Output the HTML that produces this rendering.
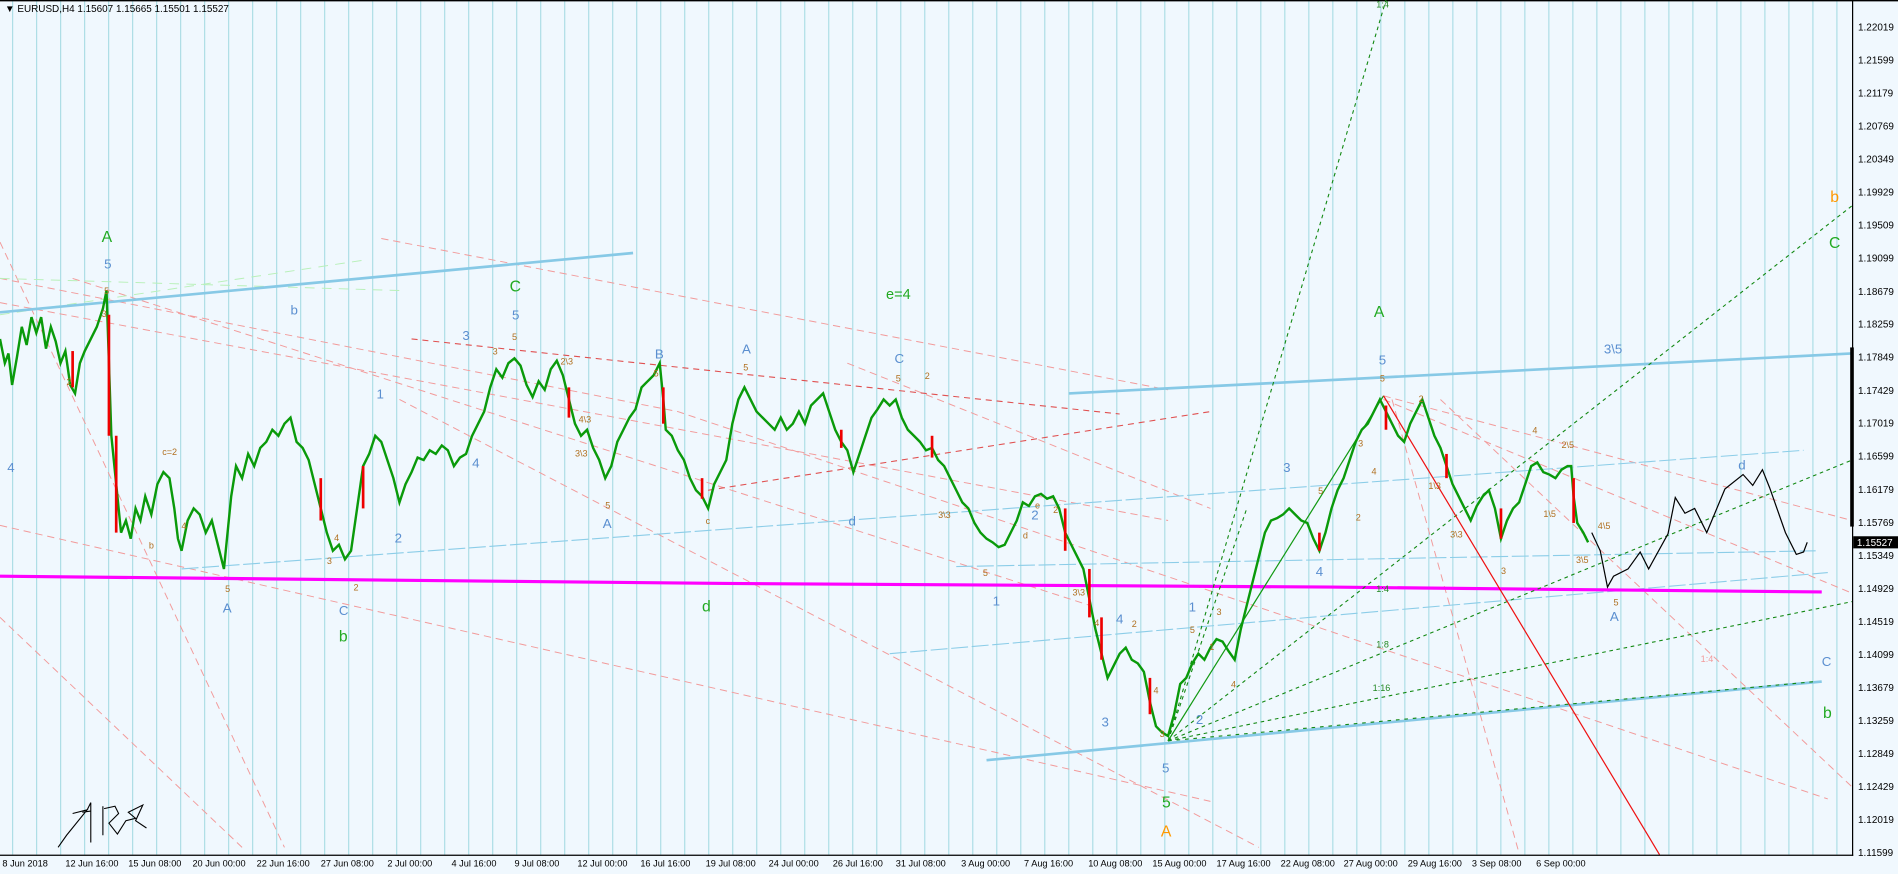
<!DOCTYPE html>
<html><head><meta charset="utf-8"><style>
html,body{margin:0;padding:0;background:#f0f8fe;overflow:hidden}
svg{display:block}
text{font-family:"Liberation Sans","DejaVu Sans",sans-serif}
</style></head><body>
<svg width="1898" height="874" viewBox="0 0 1568 722" preserveAspectRatio="none" xmlns="http://www.w3.org/2000/svg">
<defs>
<pattern id="gp" x="10" y="0" width="19.83" height="722" patternUnits="userSpaceOnUse">
<rect x="0" y="0" width="0.9" height="722" fill="#a6dbe3"/>
</pattern>
</defs>
<rect x="0" y="0" width="1568" height="722" fill="#f0f8fe"/>
<rect x="0" y="1" width="1530" height="705" fill="url(#gp)"/>
<line x1="0" y1="0.5" x2="1568" y2="0.5" stroke="#000" stroke-width="1.2"/>
<g fill="none">
 <g stroke="#f29a9a" stroke-width="0.8" stroke-dasharray="6,4">
  <path d="M0 200 L235 700"/>
  <path d="M0 434 L1000 662"/>
  <path d="M0 250 L965 430"/>
  <path d="M0 230 L560 340 L1510 660"/>
  <path d="M315 197 L965 322"/>
  <path d="M60 230 L900 500"/>
  <path d="M330 330 L1040 700"/>
  <path d="M1143 327 L1530 430"/>
  <path d="M1150 330 L1255 705"/>
  <path d="M1190 330 L1530 650"/>
  <path d="M1143 330 L1530 490"/>
  <path d="M0 510 L200 700"/>
  <path d="M700 300 L1000 420"/>
 </g>
 <g stroke="#e05050" stroke-width="0.9" stroke-dasharray="5,4">
  <path d="M340 280 L925 342"/>
  <path d="M585 405 L1000 340"/>
 </g>
 <g stroke="#b8f0b8" stroke-width="0.8" stroke-dasharray="8,6">
  <path d="M0 230 L330 240"/>
  <path d="M0 260 L300 215"/>
 </g>
 <g stroke="#8ccde8" stroke-width="0.9" stroke-dasharray="14,3">
  <path d="M150 470 L1490 372"/>
  <path d="M735 540 L1510 473"/>
  <path d="M790 468 L1500 455"/>
 </g>
 <g stroke="#87c9e6" stroke-width="2.2">
  <path d="M0 258 L523 209"/>
  <path d="M883 325 L1530 292"/>
  <path d="M815 628 L1505 563"/>
 </g>
 <path d="M0 476 L600 482 L1100 485 L1300 487 L1505 489" stroke="#ff00ff" stroke-width="2.6"/>
 <g stroke="#118811" stroke-width="0.9" stroke-dasharray="3,3">
  <path d="M965 612 L1145 0"/>
  <path d="M965 612 L1530 170"/>
  <path d="M965 612 L1530 380"/>
  <path d="M965 612 L1530 497"/>
  <path d="M965 612 L1500 563" stroke-dasharray="3,4"/>
  <path d="M965 612 L1030 420"/>
 </g>
 <path d="M965 612 L1143 327" stroke="#119911" stroke-width="1"/>
 <path d="M1143 327 L1371 706" stroke="#ee1111" stroke-width="1"/>
 <path id="px" d="M0 280 L4 300 L7 292 L10 318 L14 295 L18 270 L22 285 L26 262 L30 275 L34 262 L38 288 L42 270 L46 282 L50 300 L54 290 L58 318 L62 325 L66 300 L70 290 L75 280 L80 270 L85 255 L88 240 L90 300 L92 360 L96 400 L100 440 L104 430 L108 445 L112 420 L116 430 L120 410 L125 425 L130 400 L135 390 L140 395 L144 420 L147 445 L150 455 L155 430 L160 420 L165 425 L170 440 L175 430 L180 450 L185 470 L188 440 L191 410 L195 385 L200 395 L205 375 L210 385 L215 370 L220 365 L225 355 L230 360 L235 350 L240 345 L245 365 L250 370 L255 380 L260 400 L265 420 L270 440 L275 455 L280 450 L285 462 L290 455 L295 420 L300 385 L305 375 L310 360 L315 365 L320 380 L325 395 L330 415 L335 400 L340 390 L345 378 L350 380 L355 372 L360 375 L365 368 L370 372 L375 385 L380 378 L385 375 L390 360 L395 350 L400 340 L405 320 L410 305 L415 312 L420 300 L425 296 L430 302 L435 318 L440 328 L445 315 L450 322 L455 305 L460 298 L465 310 L470 330 L475 350 L480 360 L485 355 L490 370 L495 380 L500 395 L505 385 L510 365 L515 355 L520 345 L525 338 L530 320 L535 315 L540 310 L545 300 L548 330 L550 355 L555 360 L560 372 L565 380 L570 395 L575 405 L580 410 L585 420 L590 400 L595 390 L600 380 L605 350 L610 330 L615 320 L620 330 L625 340 L630 345 L635 350 L640 355 L645 345 L650 355 L655 350 L660 340 L665 350 L670 335 L675 330 L680 325 L685 340 L690 355 L695 365 L700 372 L705 390 L710 375 L715 360 L720 345 L725 338 L730 330 L735 335 L740 330 L745 345 L750 355 L755 360 L760 365 L765 372 L770 370 L775 380 L780 385 L785 395 L790 405 L795 415 L800 420 L805 432 L810 440 L815 445 L820 448 L825 452 L830 450 L835 440 L840 430 L845 415 L850 418 L855 410 L860 408 L865 412 L870 410 L875 420 L880 440 L885 450 L890 460 L895 470 L900 495 L905 520 L910 540 L915 560 L920 550 L925 540 L930 535 L935 545 L940 548 L945 555 L950 580 L955 600 L960 605 L965 608 L970 590 L975 565 L980 560 L985 548 L990 540 L995 545 L1000 535 L1005 528 L1010 530 L1015 538 L1020 545 L1025 520 L1030 500 L1035 480 L1040 460 L1045 440 L1050 430 L1055 428 L1060 425 L1065 420 L1070 425 L1075 430 L1080 432 L1085 445 L1090 455 L1095 440 L1100 420 L1105 405 L1110 395 L1115 380 L1120 365 L1125 355 L1130 350 L1135 340 L1140 330 L1145 340 L1150 350 L1155 360 L1160 365 L1165 350 L1170 340 L1175 330 L1180 345 L1185 360 L1190 370 L1195 385 L1200 400 L1205 410 L1210 420 L1215 430 L1220 418 L1225 410 L1230 405 L1235 420 L1240 445 L1245 430 L1250 420 L1255 415 L1260 400 L1265 385 L1270 382 L1275 390 L1280 392 L1285 395 L1290 388 L1295 385 L1298 385 L1300 410 L1303 432 L1308 440 L1312 448" stroke="#0a9a0a" stroke-width="2"/>
 <g stroke="#ee0000" stroke-width="2.2">
  <path d="M90 260 L90 360"/><path d="M96 360 L96 440"/><path d="M300 385 L300 420"/><path d="M548 320 L548 350"/><path d="M880 420 L880 455"/><path d="M900 470 L900 510"/><path d="M910 510 L910 545"/><path d="M1145 335 L1145 355"/><path d="M1240 420 L1240 445"/><path d="M1300 395 L1300 432"/><path d="M60 290 L60 320"/><path d="M265 395 L265 430"/><path d="M470 320 L470 345"/><path d="M580 395 L580 412"/><path d="M695 355 L695 370"/><path d="M770 360 L770 378"/><path d="M950 560 L950 590"/><path d="M1090 440 L1090 455"/><path d="M1195 375 L1195 395"/>
 </g>
 <path d="M1315 440 L1322 455 L1328 485 L1333 476 L1345 470 L1355 456 L1362 470 L1378 441 L1384 411 L1392 424 L1400 420 L1410 440 L1425 404 L1440 392 L1448 401 L1456 388 L1462 403 L1475 440 L1484 458 L1490 456 L1493 448" stroke="#000" stroke-width="1"/>
 <path d="M48 700 L55 690 L72 669 L60 672 M68 671 L75 670 M72 669 L75 663 L75 696 M85 666 L85 690 M86 668 L95 666 L98 672 L90 680 L97 689 L104 678 L112 676 L106 671 L118 665 L112 678 L121 684" stroke="#000" stroke-width="0.9"/>
</g>
<line x1="1530.5" y1="0" x2="1530.5" y2="707" stroke="#000" stroke-width="1"/>
<line x1="0" y1="706.5" x2="1531" y2="706.5" stroke="#000" stroke-width="1"/>
<rect x="1528.5" y="287" width="3" height="148" fill="#000"/>
<g font-size="8.2" fill="#000">
<text x="1535" y="25.3">1.22019</text><text x="1535" y="52.6">1.21599</text><text x="1535" y="79.8">1.21179</text><text x="1535" y="107.1">1.20769</text><text x="1535" y="134.4">1.20349</text><text x="1535" y="161.7">1.19929</text><text x="1535" y="188.9">1.19509</text><text x="1535" y="216.2">1.19099</text><text x="1535" y="243.5">1.18679</text><text x="1535" y="270.7">1.18259</text><text x="1535" y="298">1.17849</text><text x="1535" y="325.3">1.17429</text><text x="1535" y="352.5">1.17019</text><text x="1535" y="379.8">1.16599</text><text x="1535" y="407.1">1.16179</text><text x="1535" y="434.4">1.15769</text><text x="1535" y="461.6">1.15349</text><text x="1535" y="488.9">1.14929</text><text x="1535" y="516.2">1.14519</text><text x="1535" y="543.4">1.14099</text><text x="1535" y="570.7">1.13679</text><text x="1535" y="598">1.13259</text><text x="1535" y="625.3">1.12849</text><text x="1535" y="652.5">1.12429</text><text x="1535" y="679.8">1.12019</text><text x="1535" y="707">1.11599</text>
</g>
<g font-size="7.6" fill="#000">
<text x="2" y="716">8 Jun 2018</text><text x="54" y="716">12 Jun 16:00</text><text x="106" y="716">15 Jun 08:00</text><text x="159" y="716">20 Jun 00:00</text><text x="212" y="716">22 Jun 16:00</text><text x="265" y="716">27 Jun 08:00</text><text x="320" y="716">2 Jul 00:00</text><text x="373" y="716">4 Jul 16:00</text><text x="425" y="716">9 Jul 08:00</text><text x="477" y="716">12 Jul 00:00</text><text x="529" y="716">16 Jul 16:00</text><text x="583" y="716">19 Jul 08:00</text><text x="635" y="716">24 Jul 00:00</text><text x="688" y="716">26 Jul 16:00</text><text x="740" y="716">31 Jul 08:00</text><text x="794" y="716">3 Aug 00:00</text><text x="846" y="716">7 Aug 16:00</text><text x="899" y="716">10 Aug 08:00</text><text x="952" y="716">15 Aug 00:00</text><text x="1005" y="716">17 Aug 16:00</text><text x="1058" y="716">22 Aug 08:00</text><text x="1110" y="716">27 Aug 00:00</text><text x="1163" y="716">29 Aug 16:00</text><text x="1216" y="716">3 Sep 08:00</text><text x="1269" y="716">6 Sep 00:00</text>
</g>
<rect x="1531" y="443" width="37" height="10" fill="#000"/>
<text x="1534" y="451" font-size="8.2" fill="#fff">1.15527</text>
<text x="4" y="10" font-size="8.2" fill="#000">▼ EURUSD,H4  1.15607 1.15665 1.15501 1.15527</text>
<g font-size="13">
 <text x="84" y="200" fill="#22aa22">A</text>
 <text x="421" y="241" fill="#22aa22">C</text>
 <text x="732" y="247" fill="#22aa22" font-size="12">e=4</text>
 <text x="1135" y="262" fill="#22aa22">A</text>
 <text x="1511" y="205" fill="#22aa22">C</text>
 <text x="1512" y="167" fill="#ff9900">b</text>
 <text x="1506" y="593" fill="#22aa22">b</text>
 <text x="280" y="530" fill="#22aa22">b</text>
 <text x="580" y="505" fill="#22aa22">d</text>
 <text x="960" y="667" fill="#22aa22">5</text>
 <text x="959" y="691" fill="#ff9900">A</text>
</g>
<g font-size="11" fill="#5b8fd0">
 <text x="86" y="222">5</text><text x="423" y="264">5</text><text x="1139" y="301">5</text>
 <text x="6" y="390">4</text><text x="184" y="506">A</text><text x="280" y="508">C</text>
 <text x="240" y="260">b</text><text x="311" y="329">1</text><text x="326" y="448">2</text>
 <text x="382" y="281">3</text><text x="390" y="386">4</text><text x="541" y="296">B</text>
 <text x="613" y="292">A</text><text x="739" y="300">C</text><text x="498" y="436">A</text>
 <text x="852" y="429">2</text><text x="820" y="500">1</text><text x="701" y="434">d</text>
 <text x="1060" y="390">3</text><text x="1087" y="476">4</text><text x="910" y="600">3</text>
 <text x="922" y="515">4</text><text x="982" y="505">1</text><text x="988" y="598">2</text>
 <text x="960" y="638">5</text><text x="1330" y="513">A</text><text x="1505" y="550">C</text>
 <text x="1436" y="388">d</text><text x="1325" y="292">3\5</text>
</g>
<g font-size="7.5" fill="#b07020">
 <text x="86" y="243">5</text><text x="84" y="262">3</text><text x="186" y="489">5</text>
 <text x="134" y="376">c=2</text><text x="423" y="281">5</text><text x="407" y="293">3</text>
 <text x="463" y="301">2\3</text><text x="540" y="311">5</text><text x="614" y="306">5</text>
 <text x="740" y="315">5</text><text x="764" y="313">2</text><text x="1140" y="315">5</text>
 <text x="1172" y="332">2</text><text x="1266" y="358">4</text><text x="1290" y="370">2\5</text>
 <text x="1275" y="427">1\5</text><text x="1320" y="437">4\5</text><text x="1302" y="465">3\5</text>
 <text x="1333" y="500">5</text><text x="1198" y="444">3\3</text><text x="775" y="428">3\3</text>
 <text x="886" y="492">3\3</text><text x="475" y="377">3\3</text><text x="478" y="349">4\3</text>
 <text x="855" y="420">e</text><text x="870" y="424">2</text><text x="845" y="445">d</text>
 <text x="958" y="609">3</text><text x="953" y="573">4</text><text x="1017" y="568">4</text>
 <text x="1005" y="508">3</text><text x="983" y="523">5</text><text x="999" y="537">1</text>
 <text x="1180" y="404">1\3</text><text x="1122" y="369">3</text><text x="1133" y="392">4</text>
 <text x="1120" y="430">2</text><text x="1240" y="474">3</text><text x="1089" y="408">5</text>
 <text x="812" y="476">5</text><text x="500" y="420">5</text><text x="583" y="433">c</text>
 <text x="270" y="466">3</text><text x="292" y="488">2</text><text x="276" y="447">4</text>
 <text x="55" y="318">2</text><text x="150" y="437">4</text><text x="123" y="453">b</text>
 <text x="904" y="517">4</text><text x="935" y="518">2</text><text x="1405" y="547" fill="#f29a9a">1:4</text>
</g>
<g font-size="7.5" fill="#228822">
 <text x="1137" y="489">1:4</text><text x="1137" y="535">1:8</text><text x="1134" y="571">1:16</text>
 <text x="1137" y="6">1:4</text>
</g>
</svg>
</body></html>
